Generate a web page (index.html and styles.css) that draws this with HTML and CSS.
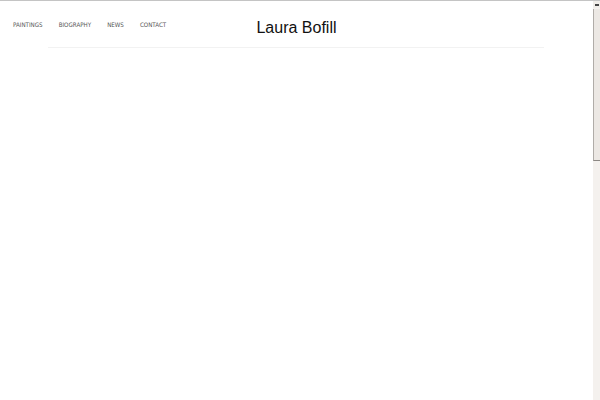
FILE: index.html
```html
<!DOCTYPE html>
<html lang="en">
<head>
<meta charset="utf-8">
<title>Laura Bofill</title>
<link rel="stylesheet" href="styles.css">
</head>
<body>
<div class="page">
  <header class="header">
    <nav class="nav">
      <a href="#" class="nav-link">PAINTINGS</a>
      <a href="#" class="nav-link">BIOGRAPHY</a>
      <a href="#" class="nav-link">NEWS</a>
      <a href="#" class="nav-link">CONTACT</a>
    </nav>
    <h1 class="title">Laura Bofill</h1>
    <div class="spacer"></div>
  </header>
  <hr class="rule">
</div>
<div class="scrollbar">
  <div class="scroll-btn"><span class="scroll-btn-mark"></span></div>
  <div class="scroll-thumb"></div>
</div>
</body>
</html>
```
FILE: styles.css
```css
html, body {
  margin: 0;
  padding: 0;
  background: #ffffff;
}
body {
  border-top: 1px solid #c4c4c4;
  font-family: "Liberation Sans", Arial, sans-serif;
  height: 399px;
  overflow: hidden;
}
.page {
  width: 593px;
}
.header {
  display: grid;
  grid-template-columns: 1fr auto 1fr;
  align-items: start;
  height: 46px;
}
.nav {
  display: flex;
  gap: 16px;
  padding: 19px 0 0 13px;
}
.nav-link {
  font-family: "DejaVu Sans Condensed", "DejaVu Sans", sans-serif;
  font-size: 6.2px;
  letter-spacing: 0;
  color: #555555;
  text-decoration: none;
  line-height: 9px;
}
.title {
  margin: 0;
  padding-top: 17px;
  font-family: "Liberation Sans", Arial, sans-serif;
  font-weight: normal;
  font-size: 16px;
  line-height: 20px;
  color: #111111;
}
.rule {
  margin: 0 49px 0 48px;
  border: 0;
  border-top: 1px solid #f2f2f2;
  height: 0;
}
.scrollbar {
  position: fixed;
  top: 1px;
  right: 0;
  width: 7px;
  height: 399px;
  background: #f4f1ee;
}
.scroll-btn {
  height: 7px;
  display: flex;
  align-items: center;
  justify-content: center;
  background: #f0ede9;
}
.scroll-btn-mark {
  width: 4px;
  height: 2px;
  background: #444;
}
.scroll-thumb {
  margin-top: 1px;
  height: 152px;
  box-sizing: border-box;
  background: #ece8e4;
  border-left: 1px solid #b0aca8;
  border-bottom: 1px solid #8c8884;
}
```
